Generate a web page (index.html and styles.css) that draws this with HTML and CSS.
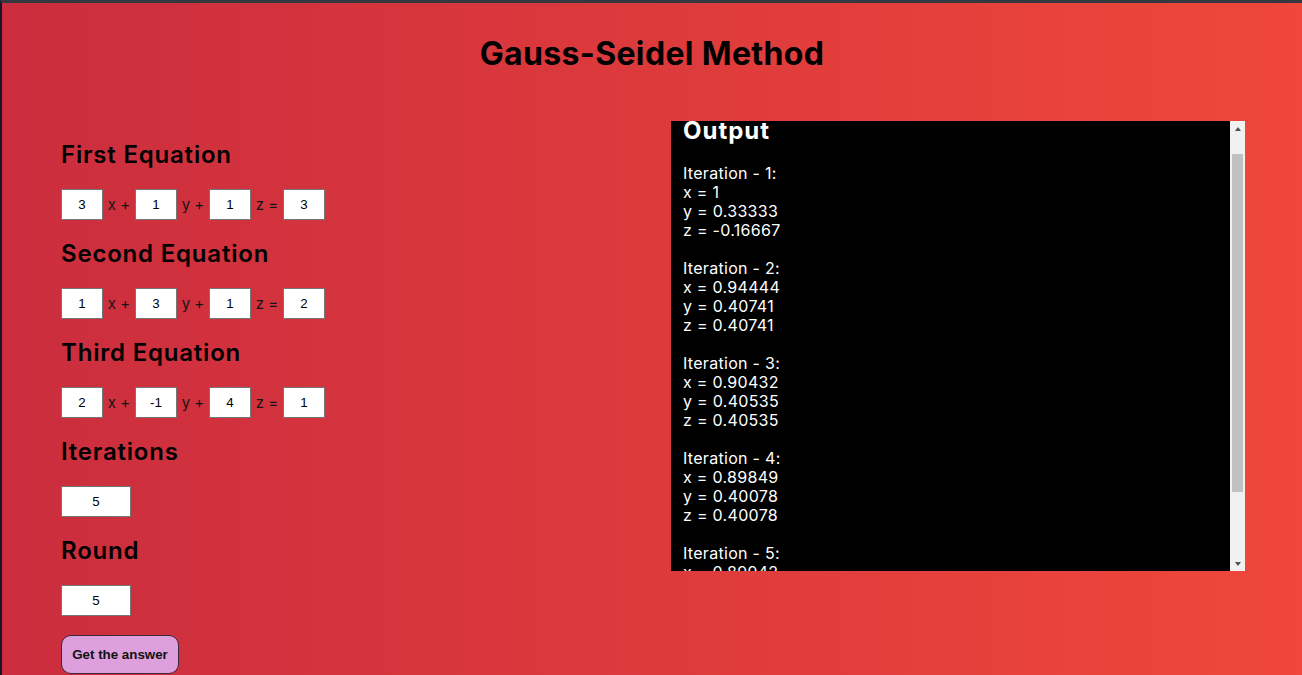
FILE: index.html
```html
<!DOCTYPE html>
<html lang="en">
<head>
<meta charset="utf-8">
<title>Gauss-Seidel Method</title>
<link rel="stylesheet" href="styles.css">
</head>
<body>
<h1 class="title">Gauss-Seidel Method</h1>
<div class="main">
  <div class="form">
    <h2 class="sec-title">First Equation</h2>
    <div class="row">
      <input class="num" type="text" value="3"><span class="op">x +</span>
      <input class="num" type="text" value="1"><span class="op">y +</span>
      <input class="num" type="text" value="1"><span class="op">z =</span>
      <input class="num" type="text" value="3">
    </div>
    <h2 class="sec-title">Second Equation</h2>
    <div class="row">
      <input class="num" type="text" value="1"><span class="op">x +</span>
      <input class="num" type="text" value="3"><span class="op">y +</span>
      <input class="num" type="text" value="1"><span class="op">z =</span>
      <input class="num" type="text" value="2">
    </div>
    <h2 class="sec-title">Third Equation</h2>
    <div class="row">
      <input class="num" type="text" value="2"><span class="op">x +</span>
      <input class="num" type="text" value="-1"><span class="op">y +</span>
      <input class="num" type="text" value="4"><span class="op">z =</span>
      <input class="num" type="text" value="1">
    </div>
    <h2 class="sec-title">Iterations</h2>
    <div class="row">
      <input class="num wide" type="text" value="5">
    </div>
    <h2 class="sec-title">Round</h2>
    <div class="row">
      <input class="num wide" type="text" value="5">
    </div>
    <button class="btn" type="button">Get the answer</button>
  </div>
  <div class="output">
    <div class="out-view">
      <h2 class="out-title">Output</h2>
      <div class="out-text">Iteration - 1:<br>x = 1<br>y = 0.33333<br>z = -0.16667<br><br>Iteration - 2:<br>x = 0.94444<br>y = 0.40741<br>z = 0.40741<br><br>Iteration - 3:<br>x = 0.90432<br>y = 0.40535<br>z = 0.40535<br><br>Iteration - 4:<br>x = 0.89849<br>y = 0.40078<br>z = 0.40078<br><br>Iteration - 5:<br>x = 0.89942<br>y = 0.39988<br>z = 0.39988</div>
    </div>
    <div class="sbar">
      <div class="sbtn"><span class="arrow-up"></span></div>
      <div class="strack"><div class="sthumb"></div></div>
      <div class="sbtn"><span class="arrow-down"></span></div>
    </div>
  </div>
</div>
</body>
</html>
```
FILE: styles.css
```css
html, body {
  overflow: hidden;
}
body {
  margin: 0;
  height: 100vh;
  box-sizing: border-box;
  border-top: 3px solid #363840;
  border-left: 2px solid #1c1420;
  background: linear-gradient(to right, #cb2d3e, #ef473a);
  font-family: "Inter", "Noto Sans", sans-serif;
  color: #000;
}
.title {
  margin: 0;
  padding-top: 31px;
  font-size: 32px;
  line-height: 40px;
  font-weight: 700;
  letter-spacing: 0.35px;
  text-align: center;
}
.main {
  display: flex;
  margin-top: 47px;
  padding-left: 59px;
  padding-right: 57px;
}
.form {
  display: flex;
  flex-direction: column;
  align-items: flex-start;
  padding-top: 18.5px;
}
.sec-title {
  margin: 0 0 20.5px;
  font-size: 24px;
  line-height: 29px;
  font-weight: 600;
  letter-spacing: 0.8px;
}
.row {
  display: flex;
  align-items: center;
  height: 31px;
  margin-bottom: 18.5px;
}
.num {
  box-sizing: border-box;
  width: 42px;
  height: 31px;
  padding: 0;
  border: 1px solid #767676;
  background: #fff;
  font-family: "Liberation Sans", Arial, sans-serif;
  font-size: 13.33px;
  color: #000;
  text-align: center;
}
.num.wide {
  width: 70px;
}
.op {
  width: 32px;
  text-align: center;
  font-size: 15px;
  color: #151515;
}
.btn {
  box-sizing: border-box;
  width: 118px;
  height: 39px;
  border: 1px solid #3a2a3a;
  border-radius: 10px;
  background: #dda0dd;
  font-family: "Liberation Sans", Arial, sans-serif;
  font-size: 13.33px;
  font-weight: 700;
  color: #111;
}
.output {
  display: flex;
  width: 574px;
  height: 450px;
  margin-left: auto;
  background: #000;
  color: #fff;
}
.out-view {
  flex: 1;
  overflow: hidden;
  padding: 0 12px;
}
.out-title {
  margin: -5px 0 18.5px;
  font-size: 24px;
  line-height: 29px;
  font-weight: 700;
  letter-spacing: 1px;
}
.out-text {
  font-size: 16px;
  line-height: 19px;
  letter-spacing: 0.3px;
}
.sbar {
  display: flex;
  flex-direction: column;
  width: 15px;
  background: #f1f1f1;
}
.sbtn {
  height: 15px;
  display: flex;
  align-items: center;
  justify-content: center;
}
.arrow-up, .arrow-down {
  width: 0;
  height: 0;
  border-left: 3.5px solid transparent;
  border-right: 3.5px solid transparent;
}
.arrow-up {
  border-bottom: 4px solid #505050;
}
.arrow-down {
  border-top: 4px solid #505050;
}
.strack {
  flex: 1;
  padding: 18px 2px 0;
}
.sthumb {
  height: 338px;
  background: #c1c1c1;
}
```
